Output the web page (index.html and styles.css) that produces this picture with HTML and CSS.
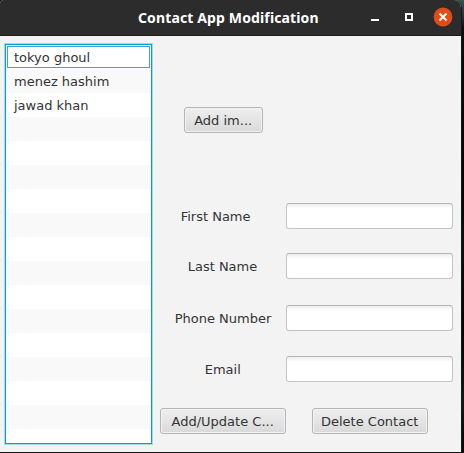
FILE: index.html
```
<!DOCTYPE html>
<html lang="en">
<head>
<meta charset="utf-8">
<title>Contact App Modification</title>
<link rel="stylesheet" href="styles.css">
</head>
<body>
<div class="window">
  <header class="titlebar">
    <h1 class="title">Contact App Modification</h1>
    <div class="controls">
      <svg width="8" height="20" viewBox="0 0 8 20"><path d="M0 12h8v2H0z" fill="#fff"/></svg>
      <svg width="8" height="20" viewBox="0 0 8 20"><path d="M1 7h6v6H1z" fill="none" stroke="#fff" stroke-width="2"/></svg>
      <svg width="20" height="20" viewBox="0 0 20 20"><circle cx="10" cy="10" r="9.4" fill="#e24c18"/><path d="M6.5 6.5l7 7M13.5 6.5l-7 7" stroke="#fff" stroke-width="2"/></svg>
    </div>
  </header>
  <main class="content">
    <ul class="list">
      <li class="selected"><span>tokyo ghoul</span></li>
      <li><span>menez hashim</span></li>
      <li><span>jawad khan</span></li>
    </ul>
    <form class="form">
      <div class="picture"><button type="button" class="add">Add im...</button></div>
      <label class="row first"><span>First Name</span><input type="text"></label>
      <label class="row last"><span>Last Name</span><input type="text"></label>
      <label class="row phone"><span>Phone Number</span><input type="text"></label>
      <label class="row email"><span>Email</span><input type="text"></label>
      <div class="actions">
        <button type="button" class="update">Add/Update C...</button>
        <button type="button" class="delete">Delete Contact</button>
      </div>
    </form>
  </main>
</div>
</body>
</html>
```

FILE: styles.css
```
* { box-sizing: border-box; }
body {
  margin: 0;
  height: 453px;
  overflow: hidden;
  background: linear-gradient(90deg, #111 0 40px, transparent 40px), linear-gradient(#335550 0, #203a36 15px, #07110f 28px, #020404 190px, #071310 240px, #020404 330px, #0b1e1a 400px, #030707 453px);
  font: 13px/24px "DejaVu Sans", sans-serif;
  color: #333;
}
.window {
  width: 462px;
  height: 453px;
  background: #f3f3f3;
  border-right: 1px solid #161616;
  border-bottom: 1px solid #161616;
  border-radius: 4px 8px 0 0;
  overflow: hidden;
}
.titlebar {
  display: flex;
  height: 36px;
  padding: 7px 8px 0 138px;
  justify-content: space-between;
  background: #2c2c2c;
  border-bottom: 1px solid #1c1c1c;
}
.title {
  margin: 0;
  font: bold 14px/22px "Noto Sans", sans-serif;
  letter-spacing: 0.13px;
  color: #fff;
  white-space: nowrap;
}
.controls { display: flex; gap: 26px; }
.controls svg { flex: none; }
.controls svg:last-child { margin-left: -6px; }
.content { display: flex; }
.list {
  width: 147px;
  height: 400px;
  margin: 8px 0 0 5px;
  padding: 0;
  list-style: none;
  border: 1px solid #039ed3;
  box-shadow: 0 0 0 1px #a6d9ea;
  background: repeating-linear-gradient(#fff 0 24px, #f9f9f9 24px 48px);
}
.list li { height: 24px; padding: 0 8px; line-height: 25px; white-space: nowrap; }
.list .selected {
  height: 22px;
  margin: 1px;
  padding: 0 6px;
  border: 1px solid #35a8d0;
  line-height: 21px;
}
.form { width: 302px; margin-left: 8px; }
.picture { height: 167px; padding: 71px 0 0 24px; }
button {
  height: 26px;
  padding: 2px 0 0;
  border: 1px solid #b5b5b5;
  border-radius: 3px;
  background: linear-gradient(#efefef, #d9d9d9);
  box-shadow: inset 0 0 0 1px #f2f2f2;
  font: inherit;
  line-height: 22px;
  color: #333;
  white-space: nowrap;
}
.add { display: block; width: 79px; }
.row { display: flex; width: 293px; height: 26px; justify-content: space-between; line-height: 28px; white-space: nowrap; }
.first { padding-left: 21px; margin-bottom: 24px; }
.last { padding-left: 28px; margin-bottom: 26px; }
.phone { padding-left: 15px; margin-bottom: 25px; }
.email { padding-left: 45px; margin-bottom: 26px; }
.row input {
  width: 167px;
  height: 26px;
  border: 1px solid #c4c4c4;
  border-top-color: #b5b5b5;
  border-radius: 3px;
  background: linear-gradient(#ededed, #fff 5px);
  font: inherit;
}
.actions { display: flex; gap: 26px; }
.update { width: 126px; }
.delete { width: 116px; }
```
